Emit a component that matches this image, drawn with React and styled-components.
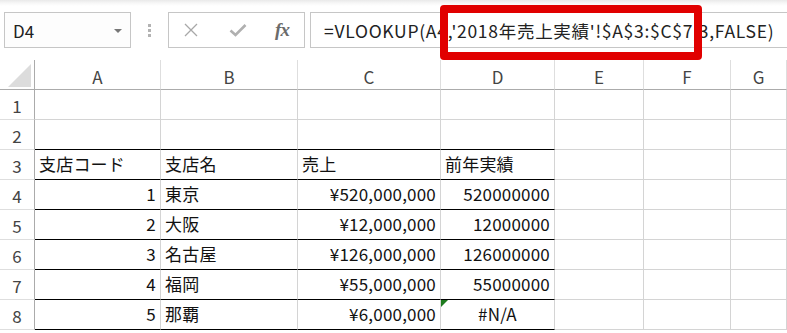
import React from 'react';
import styled, {createGlobalStyle} from "styled-components";

const GRID = "#d4d4d4";
const HEAD_LINE = "#ababab";
const FONT = `"Noto Sans CJK JP", "Noto Sans", sans-serif`;

const GlobalStyle = createGlobalStyle`
  html, body {
    margin: 0;
    padding: 0;
    background: #fff;
    overflow: hidden;
  }
  body {
    font-family: ${FONT};
    width: 787px;
    height: 333px;
  }
`;

const Page = styled.div`
  position: relative;
  width: 787px;
  height: 333px;
  overflow: hidden;
  background: linear-gradient(#e9e9e9 0px, #f7f7f7 3px, #fff 6px);
`;

const Toolbar = styled.div`
  display: flex;
  align-items: stretch;
  height: 36px;
  padding: 12px 0 0 4px;
`;

const NameBox = styled.div`
  box-sizing: border-box;
  width: 127px;
  border: 1px solid #c6c6c6;
  background: #fdfdfd;
  display: flex;
  align-items: center;
  justify-content: space-between;
  padding: 0 8px 0 8px;
  font-size: 17px;
  color: #222;
`;

const Caret = styled.span`
  width: 0;
  height: 0;
  border-left: 4px solid transparent;
  border-right: 4px solid transparent;
  border-top: 4px solid #777;
  margin-top: 1px;
`;

const Grip = styled.div`
  width: 37px;
  display: flex;
  flex-direction: column;
  align-items: center;
  justify-content: center;
  gap: 2px;
  span {
    width: 3px;
    height: 3px;
    background: #b3b3b3;
  }
`;

const ButtonGroup = styled.div`
  box-sizing: border-box;
  width: 137px;
  border: 1px solid #c6c6c6;
  display: flex;
  align-items: center;
  padding: 0 0 0 13px;
`;

const IconSlot = styled.div`
  width: ${p => p.$w}px;
  display: flex;
  align-items: center;
  justify-content: center;
`;

const Fx = styled.span`
  font-family: "Liberation Serif", "DejaVu Serif", serif;
  font-style: italic;
  font-weight: bold;
  font-size: 19px;
  color: #6b6b6b;
  letter-spacing: -1px;
`;

const FormulaBox = styled.div`
  box-sizing: border-box;
  flex: 1;
  margin-left: 5px;
  border: 1px solid #c6c6c6;
  border-right: none;
  display: flex;
  align-items: center;
  padding-left: 13px;
  font-size: 17.5px;
  letter-spacing: 0.72px;
  color: #222;
  white-space: nowrap;
  overflow: hidden;
`;

const Highlight = styled.div`
  position: absolute;
  left: 440px;
  top: 5px;
  width: 262px;
  height: 55px;
  box-sizing: border-box;
  border: 8px solid #e10000;
  border-radius: 4px;
`;

const Sheet = styled.div`
  margin-top: 12px;
  display: grid;
  grid-template-columns: 35px 126px 137px 143px 114px 89px 87px 1fr;
  grid-auto-rows: 30px;
`;

const ColHead = styled.div`
  box-sizing: border-box;
  border-bottom: 1px solid ${HEAD_LINE};
  border-right: 1px solid ${p => p.$corner ? HEAD_LINE : "#dedede"};
  display: flex;
  align-items: ${p => p.$corner ? "flex-end" : "center"};
  justify-content: ${p => p.$corner ? "flex-end" : "center"};
  padding: ${p => p.$corner ? "0 3px 2px 0" : "4px 0 0 0"};
  font-size: 17px;
  color: #444;
`;

const RowHead = styled.div`
  box-sizing: border-box;
  border-right: 1px solid ${HEAD_LINE};
  border-bottom: 1px solid #dedede;
  display: flex;
  align-items: center;
  justify-content: center;
  font-size: 17px;
  color: #444;
  padding-top: 2px;
`;

const Cell = styled.div`
  position: relative;
  box-sizing: border-box;
  border-right: 1px solid ${GRID};
  border-bottom: 1px solid ${p => p.$boxed ? "#000" : GRID};
  display: flex;
  align-items: flex-end;
  justify-content: ${p => p.$align === "right" ? "flex-end" : p.$align === "center" ? "center" : "flex-start"};
  padding: 0 4px 3px 4px;
  font-size: 17px;
  line-height: 24px;
  letter-spacing: 0.2px;
  color: #111;
  white-space: nowrap;
`;

const ErrorFlag = styled.span`
  position: absolute;
  left: 0;
  top: 0;
  width: 0;
  height: 0;
  border-top: 7px solid #1e7b1e;
  border-right: 7px solid transparent;
`;

const COLS = ["A", "B", "C", "D", "E", "F", "G"];

const rows = [
  [],
  [],
  [["支店コード"], ["支店名"], ["売上"], ["前年実績"]],
  [["1", "right"], ["東京"], ["¥520,000,000", "right"], ["520000000", "right"]],
  [["2", "right"], ["大阪"], ["¥12,000,000", "right"], ["12000000", "right"]],
  [["3", "right"], ["名古屋"], ["¥126,000,000", "right"], ["126000000", "right"]],
  [["4", "right"], ["福岡"], ["¥55,000,000", "right"], ["55000000", "right"]],
  [["5", "right"], ["那覇"], ["¥6,000,000", "right"], ["#N/A", "center", true]],
];

const CrossIcon = () => (
  <svg width="16" height="16" viewBox="0 0 16 16">
    <path d="M2 2 L14 14 M14 2 L2 14" stroke="#a8a8a8" strokeWidth="1.3" fill="none"/>
  </svg>
);

const CheckIcon = () => (
  <svg width="18" height="16" viewBox="0 0 18 16">
    <path d="M1.5 8.5 L6.5 13 L16.5 3" stroke="#b0b0b0" strokeWidth="2.6" fill="none"/>
  </svg>
);

const Corner = () => (
  <svg width="23" height="23" viewBox="0 0 23 23">
    <polygon points="23,0 23,23 0,23" fill="#dcdcdc"/>
  </svg>
);

const App = () => {
  return <>
    <GlobalStyle/>
    <Page>
      <Toolbar>
        <NameBox>D4<Caret/></NameBox>
        <Grip><span/><span/><span/></Grip>
        <ButtonGroup>
          <IconSlot $w={18}><CrossIcon/></IconSlot>
          <IconSlot $w={76}><CheckIcon/></IconSlot>
          <IconSlot $w={12}><Fx>fx</Fx></IconSlot>
        </ButtonGroup>
        <FormulaBox>=VLOOKUP(A4,'2018年売上実績'!$A$3:$C$7,3,FALSE)</FormulaBox>
      </Toolbar>
      <Highlight/>
      <Sheet>
        <ColHead $corner><Corner/></ColHead>
        {COLS.map(c => <ColHead key={c}>{c}</ColHead>)}
        {rows.map((row, r) => (
          <React.Fragment key={r}>
            <RowHead>{r + 1}</RowHead>
            {COLS.map((c, ci) => {
              const data = row[ci];
              const boxed = ci < 4 && r >= 1;
              return (
                <Cell key={c} $align={data ? data[1] : undefined} $boxed={boxed}>
                  {data && data[2] && <ErrorFlag/>}
                  {data ? data[0] : ""}
                </Cell>
              );
            })}
          </React.Fragment>
        ))}
      </Sheet>
    </Page>
  </>
}

export default App;
